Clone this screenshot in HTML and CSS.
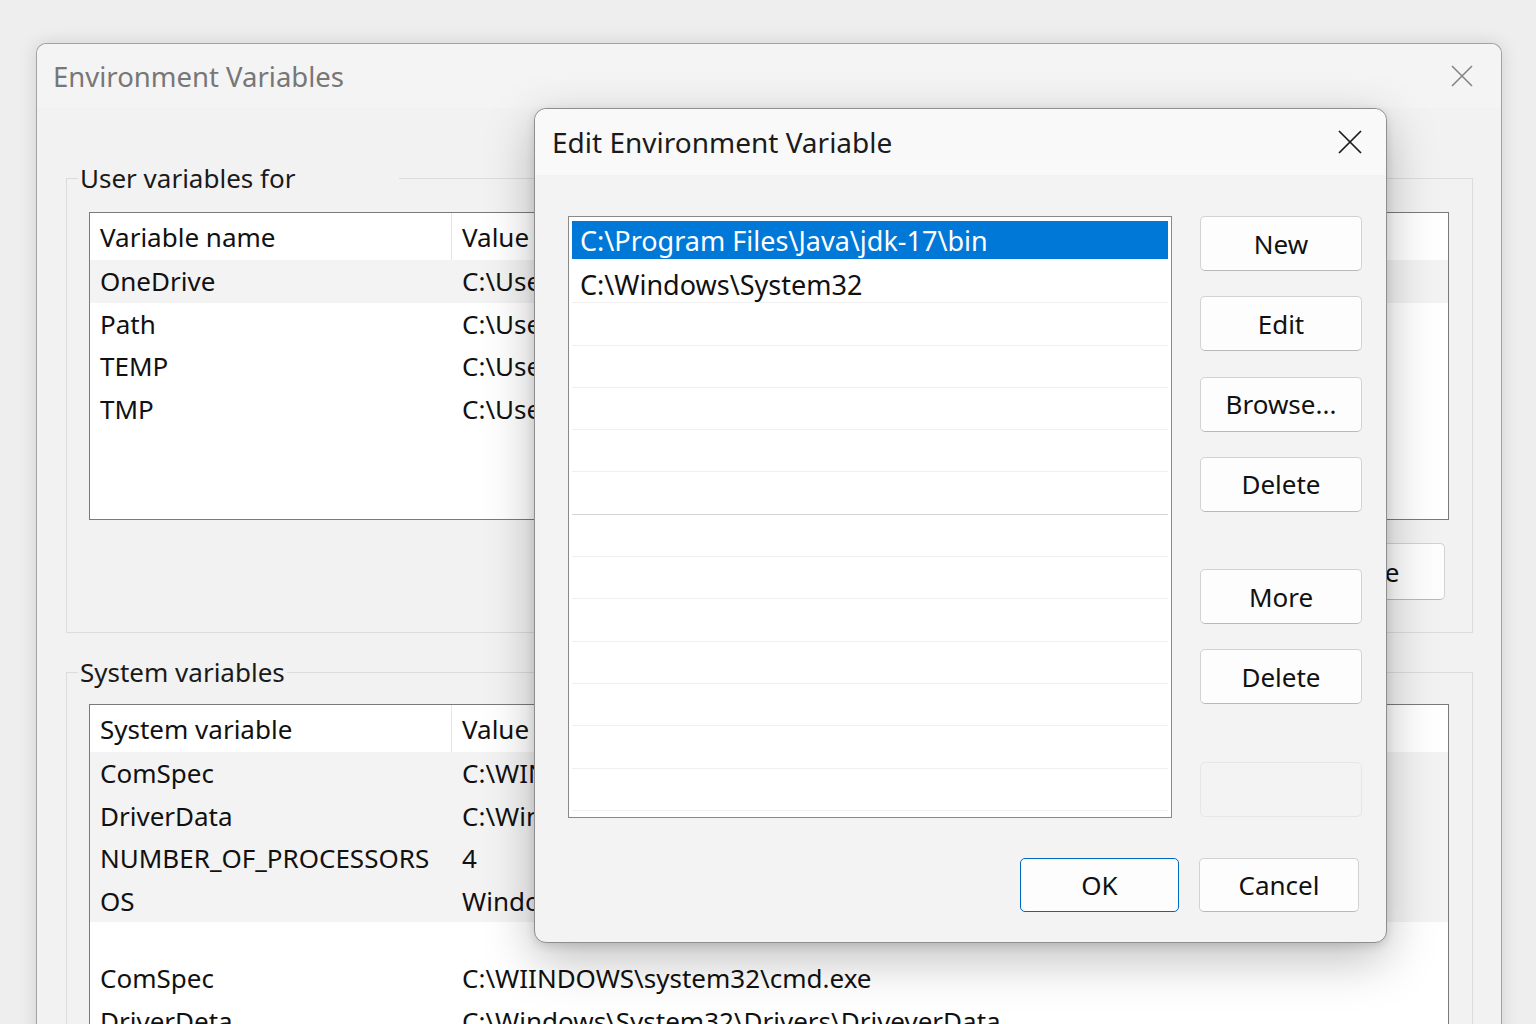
FILE: index.html
```html
<!DOCTYPE html>
<html lang="en">
<head>
    <meta charset="UTF-8">
    <meta name="viewport" content="width=device-width, initial-scale=1.0">
    <title>Environment Variables</title>
    <link rel="stylesheet" href="styles.css">
</head>
<body>

<div class="desktop">

    <!-- main window, behind -->
    <div class="window">
        <div class="titlebar">
            <span class="title">Environment Variables</span>
            <svg class="close-icon" width="22" height="22" viewBox="0 0 22 22"><path d="M1 1L21 21M21 1L1 21" stroke="#858585" stroke-width="1.6" fill="none"/></svg>
        </div>

        <div class="window-body">
            <fieldset class="group group-user">
                <legend>User variables for</legend>
                <div class="listview listview-user">
                    <div class="lv-header">
                        <div class="lv-name">Variable name</div>
                        <div class="lv-value">Value</div>
                    </div>
                    <div class="lv-row lv-row-hot"><div class="lv-name">OneDrive</div><div class="lv-value">C:\Users\user\OneDrive</div></div>
                    <div class="lv-row"><div class="lv-name">Path</div><div class="lv-value">C:\Users\user\AppData\Local\Microsoft\WindowsApps;</div></div>
                    <div class="lv-row"><div class="lv-name">TEMP</div><div class="lv-value">C:\Users\user\AppData\Local\Temp</div></div>
                    <div class="lv-row"><div class="lv-name">TMP</div><div class="lv-value">C:\Users\user\AppData\Local\Temp</div></div>
                </div>
                <div class="group-buttons">
                    <button class="btn btn-back">New...</button>
                    <button class="btn btn-back">Edit...</button>
                    <button class="btn btn-back">Delete</button>
                </div>
            </fieldset>

            <fieldset class="group group-system">
                <legend>System variables</legend>
                <div class="listview listview-system">
                    <div class="lv-header">
                        <div class="lv-name">System variable</div>
                        <div class="lv-value">Value</div>
                    </div>
                    <div class="lv-row lv-row-hot"><div class="lv-name">ComSpec</div><div class="lv-value">C:\WINDOWS\system32\cmd.exe</div></div>
                    <div class="lv-row lv-row-hot"><div class="lv-name">DriverData</div><div class="lv-value">C:\Windows\System32\Drivers\DriverData</div></div>
                    <div class="lv-row lv-row-hot"><div class="lv-name">NUMBER_OF_PROCESSORS</div><div class="lv-value">4</div></div>
                    <div class="lv-row lv-row-hot"><div class="lv-name">OS</div><div class="lv-value">Windows_NT</div></div>
                    <div class="lv-spacer"></div>
                    <div class="lv-row"><div class="lv-name">ComSpec</div><div class="lv-value">C:\WIINDOWS\system32\cmd.exe</div></div>
                    <div class="lv-row"><div class="lv-name">DriverDeta</div><div class="lv-value">C:\Windows\System32\Drivers\DriveverData</div></div>
                </div>
            </fieldset>
        </div>
    </div>

    <!-- edit dialog, on top -->
    <div class="dialog">
        <div class="dialog-titlebar">
            <span class="dialog-title">Edit Environment Variable</span>
            <svg class="close-icon dialog-close" width="24" height="24" viewBox="0 0 24 24"><path d="M1 1L23 23M23 1L1 23" stroke="#1a1a1a" stroke-width="1.7" fill="none"/></svg>
        </div>

        <div class="dialog-body">
            <div class="path-list">
                <div class="path-row path-row-selected">C:\Program Files\Java\jdk-17\bin</div>
                <div class="path-row path-row-text">C:\Windows\System32</div>
                <div class="path-row"></div>
                <div class="path-row"></div>
                <div class="path-row"></div>
                <div class="path-row"></div>
                <div class="path-row path-row-dark"></div>
                <div class="path-row"></div>
                <div class="path-row"></div>
                <div class="path-row"></div>
                <div class="path-row"></div>
                <div class="path-row"></div>
                <div class="path-row"></div>
                <div class="path-row"></div>
            </div>

            <div class="side-buttons">
                <button class="btn">New</button>
                <button class="btn">Edit</button>
                <button class="btn">Browse...</button>
                <button class="btn">Delete</button>
                <button class="btn btn-spaced">More</button>
                <button class="btn">Delete</button>
                <button class="btn btn-spaced btn-disabled"></button>
            </div>
        </div>

        <div class="dialog-footer">
            <button class="btn btn-footer btn-default">OK</button>
            <button class="btn btn-footer">Cancel</button>
        </div>
    </div>

</div>

</body>
</html>
```

FILE: styles.css
```css
body {
    margin: 0;
    padding: 0;
    background-color: #eeeeee;
    font-family: "Noto Sans", "Open Sans", sans-serif;
    color: #111;
    overflow: hidden;
}

.desktop {
    position: relative;
    height: 1024px;
    overflow: hidden;
    padding: 43px 0 0 36px;
    box-sizing: border-box;
}

/* main window */
.window {
    width: 1466px;
    height: 1040px;
    box-sizing: border-box;
    background-color: #f2f2f2;
    border: 1px solid #a2a2a2;
    border-bottom: none;
    border-radius: 10px 10px 0 0;
    box-shadow: 0 0 18px rgba(0, 0, 0, 0.12);
}

.titlebar {
    height: 64px;
    display: flex;
    align-items: center;
    justify-content: space-between;
    padding: 0 28px 0 16px;
    background-color: #f4f4f4;
    border-radius: 10px 10px 0 0;
}

.title {
    font-size: 27.5px;
    color: #777;
}

.window-body {
    padding: 0 28px 0 29px;
}

.group {
    margin: 0;
    border: 1px solid #dcdcdc;
    padding: 16px 23px 32px 22px;
}

.group legend {
    font-size: 26px;
    line-height: 36px;
    color: #1a1a1a;
    padding: 0 2px;
    margin-left: -11px;
}

.group-user {
    margin-top: 52px;
}

.group-user legend {
    padding-right: 104px;
}

.group-system {
    margin-top: 21px;
    padding-top: 14px;
}

.listview {
    background-color: #fff;
    border: 1px solid #7a7a7a;
    font-size: 26px;
}

.listview-user {
    height: 306px;
}

.listview-system {
    height: 400px;
}

.lv-header, .lv-row {
    display: grid;
    grid-template-columns: 362px 1fr;
    align-items: center;
    white-space: nowrap;
    overflow: hidden;
}

.lv-header {
    height: 47px;
}

.lv-header .lv-name {
    border-right: 1px solid #e6e6e6;
    height: 100%;
    display: flex;
    align-items: center;
}

.lv-row {
    height: 42.5px;
}

.lv-row-hot {
    background-color: #f3f3f3;
}

.lv-name {
    padding-left: 10px;
}

.lv-value {
    padding-left: 10px;
}

.lv-spacer {
    height: 35px;
}

.group-buttons {
    display: flex;
    justify-content: flex-end;
    gap: 16px;
    margin-top: 23px;
    margin-right: 4px;
}

/* buttons */
.btn {
    font-family: "Noto Sans", "Open Sans", sans-serif;
    font-size: 26px;
    color: #111;
    background-color: #fdfdfd;
    border: 1px solid #d2d2d2;
    border-bottom-color: #b9b9b9;
    border-radius: 5px;
    padding: 0;
    height: 55px;
}

.btn-back {
    width: 170px;
    height: 57px;
}

/* edit dialog */
.dialog {
    position: absolute;
    left: 534px;
    top: 108px;
    width: 853px;
    height: 835px;
    box-sizing: border-box;
    background-color: #f3f3f3;
    border: 1px solid #8e8e8e;
    border-radius: 12px;
    box-shadow: 0 16px 50px rgba(0, 0, 0, 0.26), 0 3px 10px rgba(0, 0, 0, 0.12);
}

.dialog-titlebar {
    height: 66px;
    display: flex;
    align-items: center;
    justify-content: space-between;
    padding: 0 24px 0 17px;
    background-color: #f9f9f9;
    border-radius: 12px 12px 0 0;
}

.dialog-title {
    font-size: 28px;
    color: #1b1b1b;
}

.dialog-body {
    display: grid;
    grid-template-columns: 604px 162px;
    column-gap: 28px;
    padding: 41px 24px 0 33px;
}

.path-list {
    height: 602px;
    box-sizing: border-box;
    background-color: #fff;
    border: 1px solid #898989;
    padding: 2px 3px 0;
    overflow: hidden;
    font-size: 27px;
}

.path-row {
    height: 42.3px;
    box-sizing: border-box;
    border-bottom: 1px solid #efefef;
    padding-left: 8px;
    display: flex;
    align-items: center;
    white-space: nowrap;
}

.path-row-text {
    padding-top: 6px;
}

.path-row-selected {
    height: 38px;
    margin: 2px 0 2px;
    background-color: #0078d7;
    color: #fff;
    border-bottom: none;
}

.path-row-dark {
    border-bottom-color: #d4d4d4;
}

.side-buttons {
    display: flex;
    flex-direction: column;
    gap: 25.3px;
}

.btn-spaced {
    margin-top: 32px;
}

.btn-disabled {
    background-color: #f3f3f3;
    border-color: #e6e6e6;
}

.dialog-footer {
    display: flex;
    justify-content: flex-end;
    gap: 20px;
    padding: 40px 27px 0 0;
}

.btn-footer {
    width: 160px;
    height: 54px;
}

.btn-default {
    width: 159px;
    border: 1px solid #0067c0;
}
```
